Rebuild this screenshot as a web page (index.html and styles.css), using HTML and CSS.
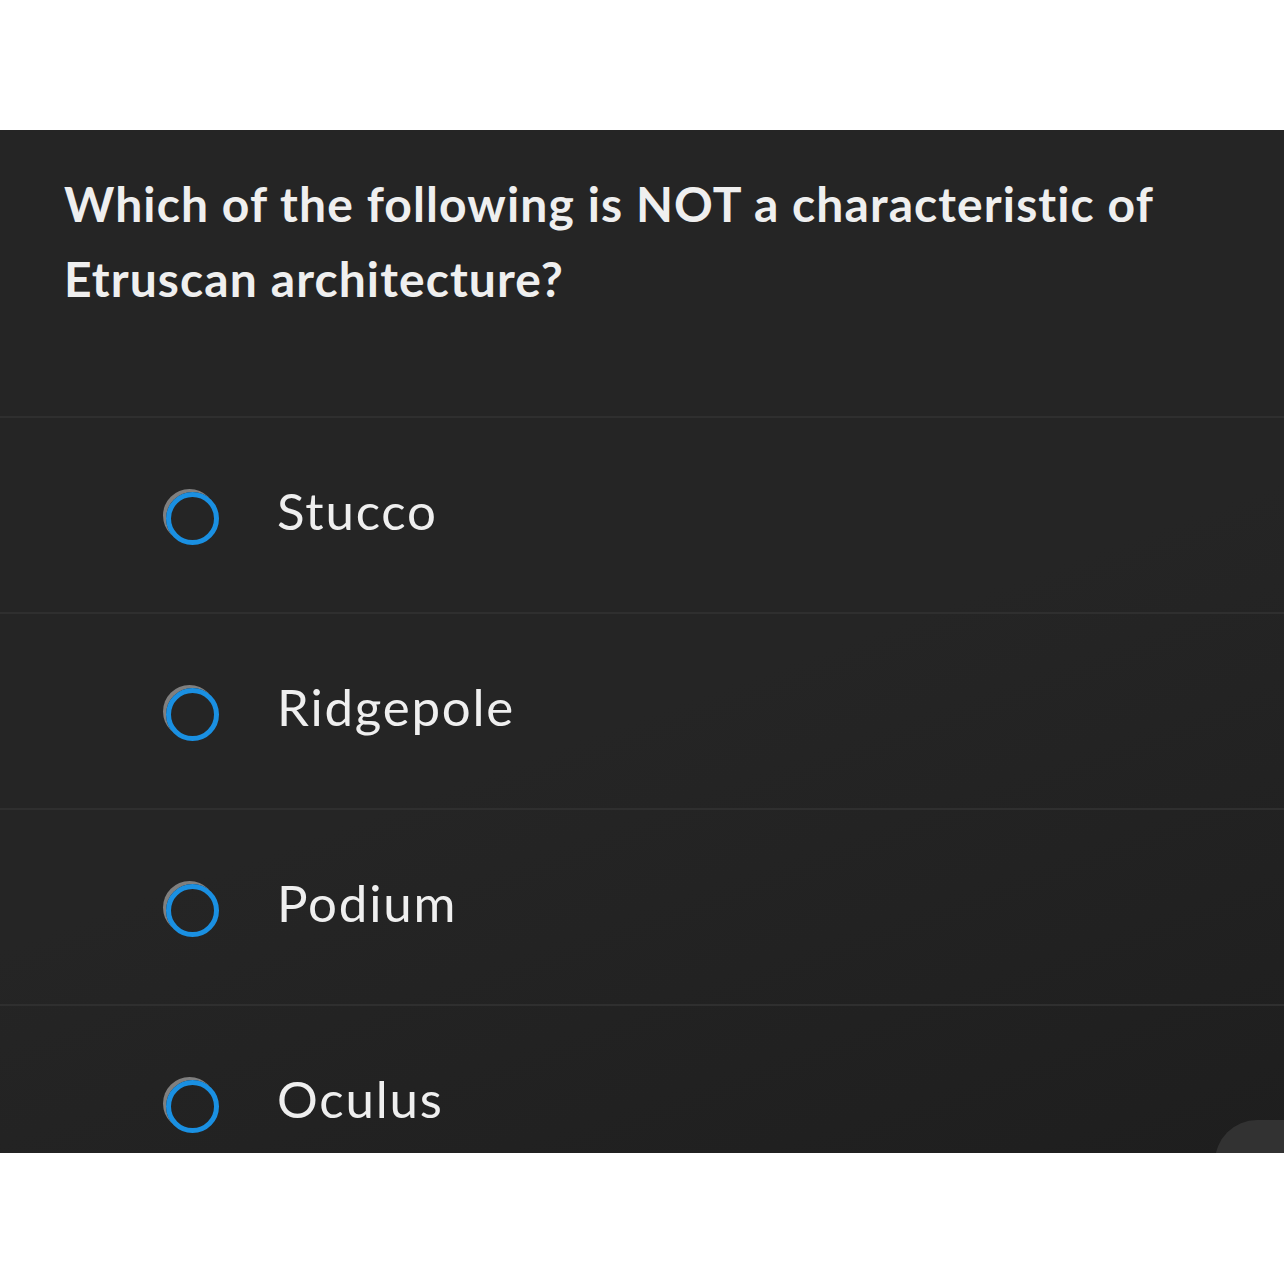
FILE: index.html
```html
<!DOCTYPE html>
<html>
<head>
<meta charset="utf-8">
<link rel="stylesheet" href="styles.css">
</head>
<body>
<div class="panel">
  <div class="question">Which of the following is NOT a characteristic of Etruscan architecture?</div>
  <div class="options">
    <div class="option"><span class="radio"></span><span class="label">Stucco</span></div>
    <div class="option"><span class="radio"></span><span class="label">Ridgepole</span></div>
    <div class="option"><span class="radio"></span><span class="label">Podium</span></div>
    <div class="option"><span class="radio"></span><span class="label">Oculus</span></div>
  </div>
  <div class="fab"></div>
</div>
</body>
</html>
```
FILE: styles.css
```css
html, body {
  margin: 0;
  padding: 0;
  background: #ffffff;
}
.panel {
  position: relative;
  margin-top: 130px;
  height: 1023px;
  overflow: hidden;
  background: linear-gradient(160deg, #252525 55%, #1e1e1e 100%);
  font-family: Lato, "Open Sans", sans-serif;
  font-variant-ligatures: none;
  color: #efefef;
}
.question {
  padding: 36px 90px 100px 64px;
  font-size: 48px;
  font-weight: 700;
  line-height: 75px;
  letter-spacing: 1.1px;
}
.option {
  display: flex;
  align-items: center;
  height: 194px;
  border-top: 2px solid #2f2f2f;
  padding-left: 166px;
}
.radio {
  box-sizing: border-box;
  width: 53px;
  height: 53px;
  border: 5px solid #1a90e2;
  border-radius: 50%;
  box-shadow: -3px -3px 0 #7f7f7f;
  margin-right: 58px;
  margin-top: 6px;
  flex: none;
}
.label {
  font-size: 51px;
  font-weight: 400;
  line-height: 1;
  letter-spacing: 1.8px;
  margin-top: -10px;
}
.fab {
  position: absolute;
  left: 1215px;
  top: 990px;
  width: 200px;
  height: 120px;
  border-radius: 42px;
  background: #323232;
}
```
